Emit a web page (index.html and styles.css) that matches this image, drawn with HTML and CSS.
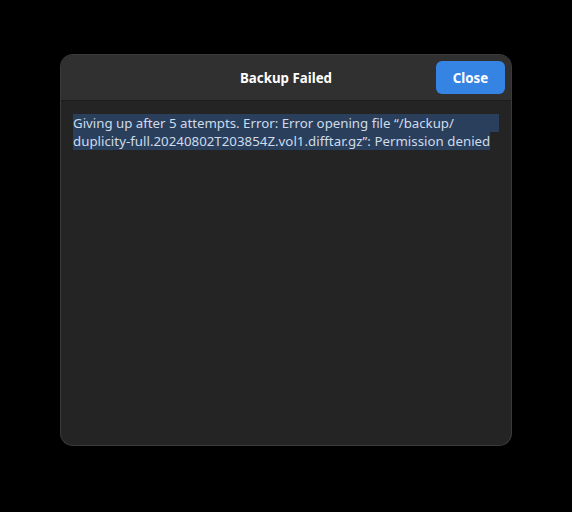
FILE: index.html
```html
<!DOCTYPE html>
<html>
<head>
<meta charset="utf-8">
<link rel="stylesheet" href="styles.css">
</head>
<body>
<div class="window">
  <header class="headerbar">
    <div class="title">Backup Failed</div>
    <button class="close-btn">Close</button>
  </header>
  <main class="content">
    <div class="message">
      <span class="sel line1">Giving up after 5 attempts. Error: Error opening file “/backup/</span>
      <span class="sel line2">duplicity-full.20240802T203854Z.vol1.difftar.gz”: Permission denied</span>
    </div>
  </main>
</div>
</body>
</html>
```
FILE: styles.css
```css
html, body {
  margin: 0;
  padding: 0;
  background: #000;
  width: 572px;
  height: 512px;
  font-family: "Noto Sans", "Open Sans", sans-serif;
}
body {
  padding: 55px 0 0 61px;
  box-sizing: border-box;
}
.window {
  width: 450px;
  height: 390px;
  background: #242424;
  border-radius: 12px;
  box-shadow: 0 0 0 1px #3a3a3a;
  overflow: hidden;
  display: flex;
  flex-direction: column;
}
.headerbar {
  position: relative;
  height: 45px;
  background: #303030;
  border-bottom: 1px solid #1c1c1c;
  display: flex;
  align-items: center;
  justify-content: center;
  flex-shrink: 0;
}
.title {
  color: #ffffff;
  font-weight: 700;
  font-size: 13.3px;
}
.close-btn {
  position: absolute;
  right: 6px;
  top: 6px;
  width: 69px;
  height: 33px;
  border: none;
  border-radius: 6px;
  background: #3584e4;
  color: #ffffff;
  font-family: "Noto Sans", "Open Sans", sans-serif;
  font-weight: 700;
  font-size: 13.3px;
  padding: 0;
}
.content {
  padding: 13px 12px 0 12px;
}
.message {
  font-size: 13.25px;
  line-height: 18px;
  color: #cfdbea;
  white-space: nowrap;
}
.sel {
  background: #2a3f5c;
}
.line1 {
  display: block;
  width: 426px;
}
.line2 {
  display: inline-block;
  letter-spacing: 0.03px;
}
```
